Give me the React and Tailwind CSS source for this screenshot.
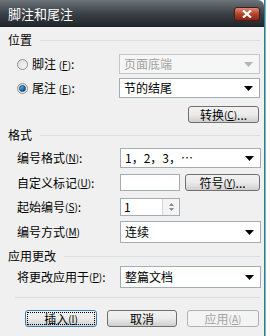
import React from "react";

const font = { fontFamily: '"Noto Sans CJK SC", "Noto Sans", sans-serif' };

function Arrow({ disabled }) {
  return (
    <svg width="9" height="5" viewBox="0 0 9 5" className="shrink-0">
      <path d="M0 0 H9 L4.5 5 Z" fill={disabled ? "#b4b4b4" : "#000"} />
    </svg>
  );
}

function Select({ value, disabled, h = "h-[20px]" }) {
  return (
    <div
      className={`w-[141px] ${h} flex items-center justify-between pl-[4px] pr-[6px] border ${
        disabled ? "border-[#c3c6c9] bg-[#f6f6f6] text-[#a0a0a0]" : "border-[#a5acb5] bg-white text-black"
      }`}
    >
      <span className="text-[12px] leading-none">{value}</span>
      <Arrow disabled={disabled} />
    </div>
  );
}

function Btn({ children, w = "w-[71px]", kind }) {
  const base =
    kind === "disabled"
      ? "border-[#adb2b5] bg-[#f4f4f4] text-[#a3a3a3]"
      : kind === "default"
      ? "border-[#3c7fb1] bg-gradient-to-b from-[#f2f2f2] via-[#ebebeb] to-[#cfcfcf] text-black"
      : "border-[#707070] bg-gradient-to-b from-[#f2f2f2] via-[#ebebeb] to-[#cfcfcf] text-black";
  return (
    <div className={`${w} h-[17px] rounded-[3px] border ${base} flex items-center justify-center p-[1px]`}>
      <div
        className={`w-full h-full flex items-center justify-center text-[12px] leading-none ${
          kind === "default" ? "outline outline-1 outline-dotted outline-black -outline-offset-1" : ""
        }`}
      >
        {children}
      </div>
    </div>
  );
}

function Section({ title, className = "" }) {
  return (
    <div className={`flex items-center h-[16px] pl-[8px] pr-[4px] ${className}`}>
      <span className="text-[12px] leading-none text-black">{title}</span>
      <div className="flex-1 ml-[8px] border-t border-[#d5dfe5]" />
    </div>
  );
}

function Key({ k }) {
  return (
    <span className="text-[10px]">
      (<span className="underline">{k}</span>)
    </span>
  );
}

function Radio({ checked }) {
  return (
    <div className="w-[11px] h-[11px] rounded-full border border-[#8e8f8f] bg-gradient-to-br from-[#dcdcdc] to-[#fafafa] flex items-center justify-center">
      {checked && (
        <div className="w-[7px] h-[7px] rounded-full bg-gradient-to-br from-[#8fd0f4] via-[#1f7fc2] to-[#0d4f85] border border-[#0b3f6b]" />
      )}
    </div>
  );
}

function Label({ children, w = "w-[103px]" }) {
  return <div className={`${w} text-[12px] leading-none text-black flex items-center`}>{children}</div>;
}

export default function App() {
  return (
    <div className="w-[270px] h-[336px] flex bg-white overflow-hidden" style={font}>
      <div className="w-[265px] h-full flex flex-col border-r border-[#5c6a74]">
        {/* title bar */}
        <div className="h-[27px] shrink-0 flex items-center justify-between pl-[8px] pr-[4px] bg-gradient-to-b from-[#6d747a] via-[#3a4147] to-[#1f2428] rounded-tr-[6px]">
          <span className="text-[13px] text-white leading-none">脚注和尾注</span>
          <div className="w-[26px] h-[14px] rounded-[3px] border border-[#4a1c14] bg-gradient-to-b from-[#d98a78] via-[#b5432d] to-[#8a2414] flex items-center justify-center">
            <svg width="10" height="8" viewBox="0 0 10 8">
              <path d="M1 0.5 L9 7.5 M9 0.5 L1 7.5" stroke="#fff" strokeWidth="2.2" />
            </svg>
          </div>
        </div>

        {/* body */}
        <div className="flex-1 bg-[#f0f0f0] flex flex-col">
          <Section title="位置" className="mt-[5px]" />

          <div className="flex items-center mt-[6px] pl-[17px]">
            <div className="w-[102px] flex items-center gap-[4px] text-[12px] leading-none">
              <Radio />
              <span>脚注 <Key k="F" />:</span>
            </div>
            <Select value="页面底端" disabled />
          </div>
          <div className="flex items-center mt-[4px] pl-[17px]">
            <div className="w-[102px] flex items-center gap-[4px] text-[12px] leading-none">
              <Radio checked />
              <span>尾注 <Key k="E" />:</span>
            </div>
            <Select value="节的结尾" />
          </div>
          <div className="flex justify-end mt-[8px] pr-[5px]">
            <Btn>
              转换 <Key k="C" />...
            </Btn>
          </div>

          <Section title="格式" className="mt-[4px]" />

          <div className="flex items-center mt-[5px] pl-[17px]">
            <Label>
              编号格式 <Key k="N" />:
            </Label>
            <Select value="1，2，3，…" />
          </div>
          <div className="flex items-center mt-[6px] pl-[17px]">
            <Label>
              自定义标记 <Key k="U" />:
            </Label>
            <div className="w-[60px] h-[17px] bg-white border border-[#a5acb5]" />
            <div className="ml-[5px]">
              <Btn w="w-[75px]">
                符号 <Key k="Y" />...
              </Btn>
            </div>
          </div>
          <div className="flex items-center mt-[7px] pl-[17px]">
            <Label>
              起始编号 <Key k="S" />:
            </Label>
            <div className="w-[60px] h-[18px] bg-white border border-[#a5acb5] flex">
              <span className="flex-1 text-[12px] leading-none pl-[3px] flex items-center">1</span>
              <div className="w-[17px] border-l border-[#d3d6d9] bg-[#f4f4f4] flex flex-col items-center justify-center gap-[2px]">
                <svg width="5" height="3" viewBox="0 0 5 3">
                  <path d="M0 3 L2.5 0 L5 3 Z" fill="#8a8a8a" />
                </svg>
                <svg width="5" height="3" viewBox="0 0 5 3">
                  <path d="M0 0 L5 0 L2.5 3 Z" fill="#8a8a8a" />
                </svg>
              </div>
            </div>
          </div>
          <div className="flex items-center mt-[5px] pl-[17px]">
            <Label>
              编号方式 <Key k="M" />
            </Label>
            <Select value="连续" h="h-[22px]" />
          </div>

          <Section title="应用更改" className="mt-[5px]" />

          <div className="flex items-center mt-[2px] pl-[17px]">
            <Label>
              将更改应用于 <Key k="P" />:
            </Label>
            <Select value="整篇文档" h="h-[22px]" />
          </div>

          <div className="mt-[9px] mx-[4px] ml-[15px] border-t border-[#d5dfe5]" />

          <div className="flex items-center mt-[12px] pl-[25px] gap-[10px]">
            <Btn kind="default" w="w-[72px]">
              插入 <Key k="I" />
            </Btn>
            <Btn w="w-[70px]">取消</Btn>
            <Btn kind="disabled" w="w-[72px]">
              应用 <Key k="A" />
            </Btn>
          </div>
        </div>
      </div>
      <div className="w-[1px] h-full bg-[#5fc6e0]" />
      <div className="flex-1 h-full bg-white" />
    </div>
  );
}
